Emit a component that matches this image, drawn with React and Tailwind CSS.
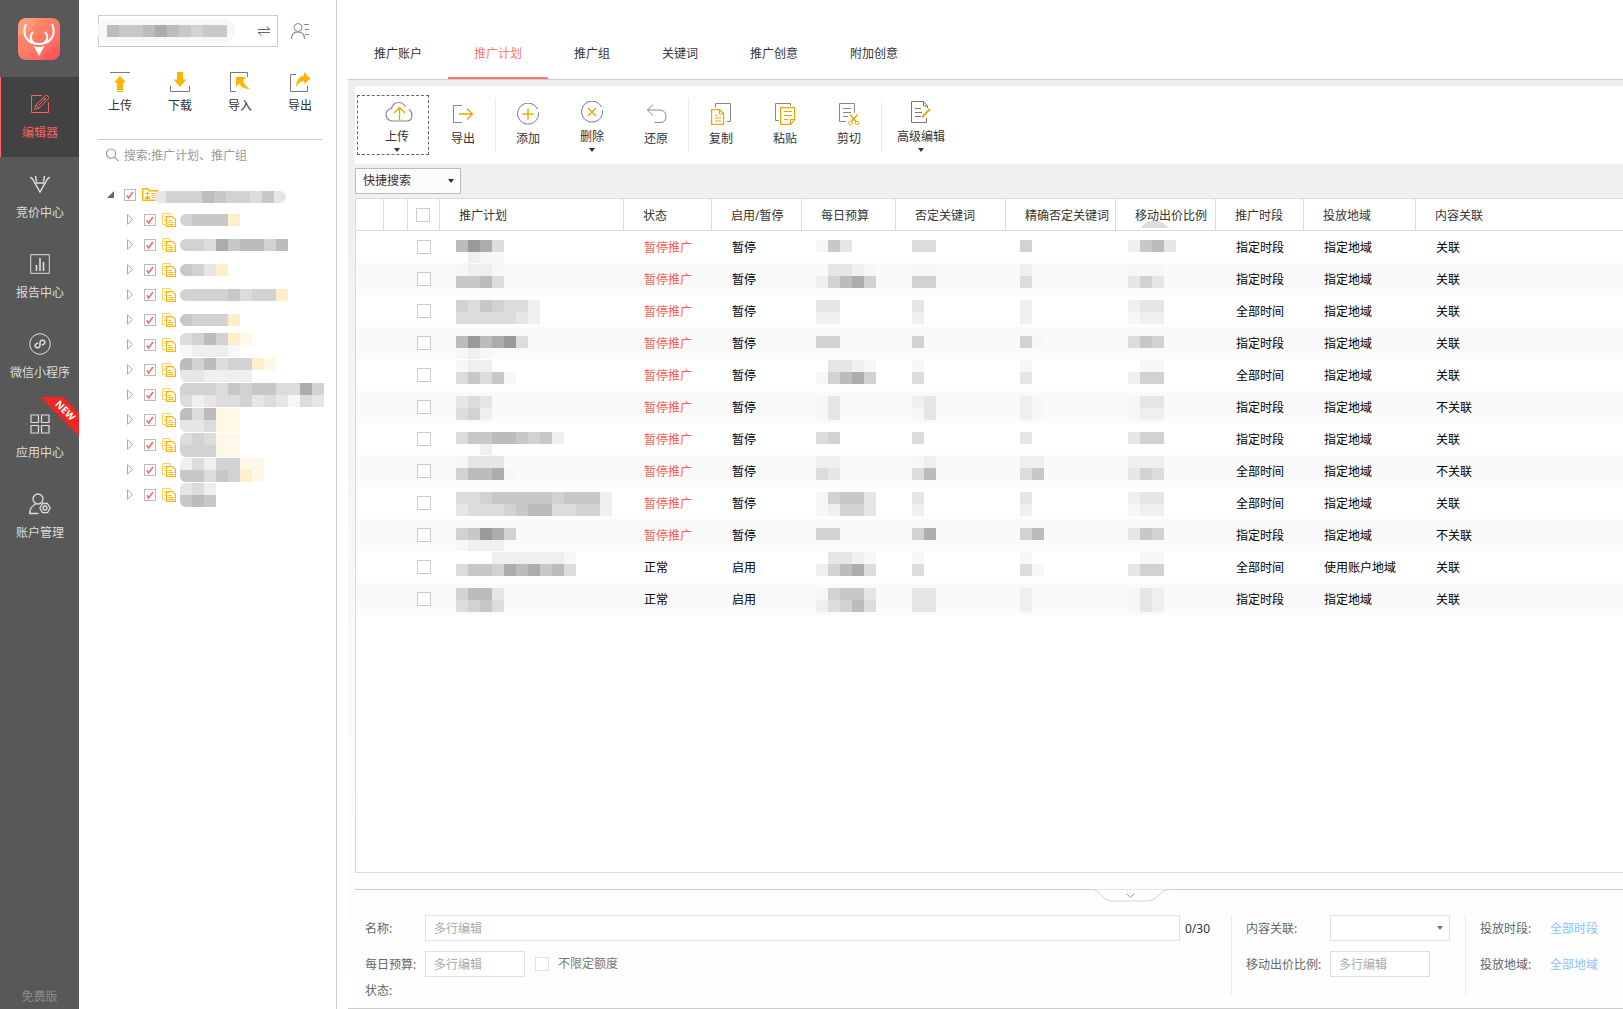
import { useState } from "react";

/* ---------- masked text blocks ---------- */

// one character = one 12px cell, 0 is empty, 1 (light) .. 9 (dark), y / w are yellow
const SHADES = {
  0: "",
  1: "bg-[#f7f7f7]",
  2: "bg-[#efefef]",
  3: "bg-[#e6e6e6]",
  4: "bg-[#dcdcdc]",
  5: "bg-[#d2d2d2]",
  6: "bg-[#c8c8c8]",
  7: "bg-[#bcbcbc]",
  8: "bg-[#acacac]",
  9: "bg-[#999999]",
  y: "bg-[#ffeec9]",
  w: "bg-[#fff8e8]",
};

function Mosaic({ lines, className = "" }) {
  return (
    <span className={`flex flex-col overflow-hidden ${className}`} aria-hidden>
      {lines.map((line, i) => (
        <span key={i} className="flex">
          {line.split("").map((c, j) => (
            <span key={j} className={`size-3 shrink-0 ${SHADES[c]}`} />
          ))}
        </span>
      ))}
    </span>
  );
}

/* ---------- icons ---------- */

function Icon({ size = "size-5", box = 20, className = "", children }) {
  return (
    <svg
      viewBox={`0 0 ${box} ${box}`}
      className={`${size} shrink-0 ${className}`}
      fill="none"
      stroke="currentColor"
      strokeWidth="1"
      aria-hidden
    >
      {children}
    </svg>
  );
}

const Y = "#ffb400";
const O = "#eba600";

function Logo() {
  return (
    <svg viewBox="0 0 42 42" className="size-[42px]" aria-label="logo">
      <defs>
        <linearGradient id="lg" x1="0" y1="0" x2="1" y2="1">
          <stop offset="0" stopColor="#fa9a6c" />
          <stop offset="1" stopColor="#fd5a62" />
        </linearGradient>
        <clipPath id="lc">
          <rect width="42" height="42" rx="8" />
        </clipPath>
      </defs>
      <g clipPath="url(#lc)">
        <rect width="42" height="42" fill="url(#lg)" />
        <path d="M0 18Q14 16 20 0H0z" fill="#fff" opacity=".1" />
        <path d="M22 42q6-12 20-14v14z" fill="#f4484f" opacity=".35" />
      </g>
      <g fill="none" stroke="#fff" strokeWidth="2" strokeLinecap="round">
        <path d="M7.500 7c-2 6-1 12 3 15.500 3 2.500 6.500 3.500 10.500 3.500s7.500-1 10.500-3.500c4-3.500 5-9.500 3-15.500" />
        <path d="M14.500 14.500c-3 3.500-2.500 8 2 11M27.500 14.500c3 3.500 2.500 8-2 11" />
        <path d="M9 20.500q1.500 3 5 4M33 20.500q-1.500 3-5 4" />
      </g>
      <path d="M15.500 28q5.500 2 11 0l-2 3.500L21 38l-3.500-6.500z" fill="#fff" />
    </svg>
  );
}

const EditIcon = () => (
  <Icon>
    <path d="M12 1.500H1.500v17h17V8" />
    <path d="M4.500 15.500l1.500-4.500L15 2q1.500-1.200 3 .2t0 3L9 14.200z M13.500 3.500l3 3M6 11l3 3.200M8.500 11.500l7-7" />
  </Icon>
);

const BidIcon = () => (
  <Icon className="[stroke-width:1.5]">
    <path d="M2 4l8 14 8-14M5 9h10M5.500 2l1 5.500M14.500 2l-1 5.500M0 3l3 2.500M20 3l-3 2.500" />
  </Icon>
);

const ReportIcon = () => (
  <Icon>
    <rect x=".7" y=".7" width="18.600" height="18.600" />
    <path d="M6.500 11v6M10 4v13M13.500 8v9" strokeWidth="1.600" />
  </Icon>
);

const MiniAppIcon = () => (
  <Icon size="size-[22px]" box={22}>
    <circle cx="11" cy="11" r="10.300" />
    <path
      d="M8.500 10.200c-2 .5-3 2-2 3.600 1 1.400 4.300 1.200 4.500-1.300V9.500c.2-2.500 3.500-2.900 4.500-1.300 1 1.500 0 3-2 3.600"
      strokeWidth="1.600"
      strokeLinecap="round"
    />
  </Icon>
);

const AppsIcon = () => (
  <Icon>
    <path d="M1 1h7.500v7.500H1zM11.500 1H19v7.500h-7.500zM1 11.500h7.500V19H1zM11.500 11.500H19V19h-7.500z" strokeWidth="1.200" />
  </Icon>
);

const AccountIcon = () => (
  <Icon size="size-[22px]" box={22} className="[stroke-width:1.300]">
    <circle cx="9" cy="6" r="5" />
    <path d="M9.500 20.500H.7q0-7 6.300-9.500" />
    <path d="M13.500 10.500h5l2.700 4.500-2.700 4.700h-5L10.800 15z" strokeLinejoin="round" />
    <circle cx="16" cy="15" r="2" />
  </Icon>
);

const FolderIcon = () => (
  <Icon size="size-4" box={16}>
    <path d="M.7 13.300V1.700h5l1.500 2h8.100v9.600z" stroke={Y} strokeWidth="1.400" />
    <path d="M5.500 4.500v4M3.500 6.500h4M9.500 6.500H13M9.500 8.500H13M9.500 10.500H13" stroke={Y} />
    <path d="M3 12q0-3 2.500-3T8 12z" fill={Y} stroke="none" />
  </Icon>
);

const PlanIcon = () => (
  <Icon size="size-[14px]" box={14}>
    <path d="M4 11.500H.5V.5H8V3" stroke="#ffcf66" />
    <path d="M2 3.500h4M2 5.500h2M2 7.500h2" stroke="#ffcf66" />
    <path d="M4.600 3.600h6l2.800 2.800v7H4.600z" stroke={Y} strokeWidth="1.200" fill="#fff" />
    <path d="M6.500 7.500h3M6.500 9.500h5M6.500 11.500h5" stroke={Y} />
  </Icon>
);

/* ---------- small controls ---------- */

function Check({ label, size = "size-[14px]", border = "border-[#ccc]", checked = false }) {
  return (
    <span className={`relative block shrink-0 ${size}`}>
      <input
        type="checkbox"
        aria-label={label}
        defaultChecked={checked}
        className={`peer block size-full appearance-none border bg-white ${border}`}
      />
      <svg viewBox="0 0 12 12" className="pointer-events-none absolute inset-0 hidden peer-checked:block" aria-hidden>
        <path d="M2.800 6.200l1.800 2.800L9 3" fill="none" stroke="#fa6e6c" strokeWidth="1.700" />
      </svg>
    </span>
  );
}

const Caret = ({ className = "" }) => (
  <svg viewBox="0 0 6 4" className={`h-1 w-1.5 ${className}`} fill="currentColor" aria-hidden>
    <path d="M0 0h6L3 4z" />
  </svg>
);

/* ---------- data ---------- */

const NAV = [
  { text: "编辑器", icon: EditIcon, active: true },
  { text: "竞价中心", icon: BidIcon },
  { text: "报告中心", icon: ReportIcon },
  { text: "微信小程序", icon: MiniAppIcon },
  { text: "应用中心", icon: AppsIcon, isNew: true },
  { text: "账户管理", icon: AccountIcon },
];

const SIDE_ACTIONS = [
  {
    text: "上传",
    icon: (
      <Icon>
        <path d="M0 .5h20" stroke="#777" />
        <path d="M10 4l6 6.500h-3V18H7v-7.500H4zM7 19h6v1H7z" fill={Y} stroke="none" />
      </Icon>
    ),
  },
  {
    text: "下载",
    icon: (
      <Icon>
        <path d="M.5 14v5.500h19V14" stroke="#777" />
        <path d="M7 0h6v7.500h3.500L10 15 3.500 7.500H7z" fill={Y} stroke="none" />
      </Icon>
    ),
  },
  {
    text: "导入",
    icon: (
      <Icon>
        <path d="M6 19.500H.5V.5h17V5" stroke="#777" />
        <path d="M6 5h10l-3 3.500q1 5 7 8.500-8 0-11-5.500L6 15z" fill={Y} stroke="none" />
      </Icon>
    ),
  },
  {
    text: "导出",
    icon: (
      <Icon>
        <path d="M6 2.500H.5v17h17V14" stroke="#777" />
        <path d="M14 0l6.500 6.500L14 12V9q-5 0-8 6.500Q6 5 14 3.500z" fill={Y} stroke="none" />
      </Icon>
    ),
  },
];

const TREE = [
  ["5666y"],
  ["554867757"],
  ["653y"],
  ["55556455y"],
  ["6555y"],
  ["4575yw", "12221"],
  ["757455yw", "332222"],
  ["555465664485", "423445343143"],
  ["747ww", "334ww"],
  ["454ww", "555ww"],
  ["24255ww", "66465yw"],
  ["342", "676"],
];

const TABS = ["推广账户", "推广计划", "推广组", "关键词", "推广创意", "附加创意"];

const TOOLS = [
  [
    {
      text: "导出",
      icon: (
        <Icon size="size-[22px]" box={22}>
          <path d="M10 2.500H1.500v17H10" stroke="#888" />
          <path d="M7 11h13M15 5.500l5.500 5.500-5.500 5.500" stroke={O} strokeWidth="1.300" />
        </Icon>
      ),
    },
  ],
  [
    {
      text: "添加",
      icon: (
        <Icon size="size-[22px]" box={22}>
          <path d="M20.500 6a10.500 10.500 0 1 0 1 3.500" stroke="#777" />
          <path d="M11 5.500v11M5.500 11h11" stroke={O} strokeWidth="1.400" />
        </Icon>
      ),
    },
    {
      text: "删除",
      menu: true,
      icon: (
        <Icon size="size-[22px]" box={22}>
          <path d="M20.500 6a10.500 10.500 0 1 0 1 3.500" stroke="#777" />
          <path d="M7 7l8 8M15 7l-8 8" stroke={O} strokeWidth="1.400" />
        </Icon>
      ),
    },
    {
      text: "还原",
      icon: (
        <Icon size="size-[22px]" box={22}>
          <path d="M8 1.500L2.500 7 8 12.500M2.500 7H15q6 .5 6 6.500t-6 6H9.500" stroke="#888" />
        </Icon>
      ),
    },
  ],
  [
    {
      text: "复制",
      icon: (
        <Icon size="size-[22px]" box={22}>
          <path d="M5.500 4.500v-4h15v18H17" stroke="#888" />
          <path d="M1.600 6.600h8l4 4v10.800h-12zM9.500 7v4h4" stroke={O} strokeWidth="1.200" />
          <path d="M5 12.500h2M5 15h6M5 18h6" stroke={O} />
        </Icon>
      ),
    },
    {
      text: "粘贴",
      icon: (
        <Icon size="size-[22px]" box={22}>
          <path d="M5 17.500H1.500V.5h15V3" stroke="#888" />
          <path d="M6.600 4.600h14v12l-4 4.800h-10zM20.500 16.500h-4v4.500" stroke={O} strokeWidth="1.200" />
          <path d="M10 8.500h8M10 12.500h8M10 16.500h4" stroke={O} />
        </Icon>
      ),
    },
    {
      text: "剪切",
      icon: (
        <Icon size="size-[22px]" box={22}>
          <path d="M8 18.500H1.500V.5h15V10M5 5.500h8M5 9.500h8M5 13.500h5" stroke="#888" />
          <path d="M12 11.500l6 7M19.500 11.500l-6 7" stroke={O} strokeWidth="1.500" />
          <circle cx="12.500" cy="20" r="1.800" stroke={O} />
          <circle cx="19" cy="20" r="1.800" stroke={O} />
        </Icon>
      ),
    },
  ],
];

// mask = name / daily budget / negative words / exact negative words / mobile bid
const ROWS = [
  [true, "指定时段", "指定地域", "关联", [["7984", "0211"], ["163"], ["44"], ["5"], ["2673"]]],
  [true, "指定时段", "指定地域", "关联", [["1221", "6674"], ["03321", "25785"], ["11", "55"], ["2", "4"], ["111", "353"]]],
  [true, "全部时间", "指定地域", "关联", [["5465442", "4444432"], ["33", "22"], ["3", "2"], ["2", "2"], ["233", "122"]]],
  [true, "指定时段", "指定地域", "关联", [["797894", "1210"], ["55"], ["5"], ["51"], ["465"]]],
  [true, "全部时间", "指定地域", "关联", [["122", "46461"], ["03321", "15785"], ["1", "4"], ["1", "3"], ["011", "255"]]],
  [true, "指定时段", "指定地域", "不关联", [["343", "452"], ["13", "13"], ["23", "13"], ["21", "21"], ["133", "122"]]],
  [true, "指定时段", "指定地域", "关联", [["466776562", "0020"], ["45"], ["4"], ["3"], ["355"]]],
  [true, "全部时间", "指定地域", "不关联", [["1333", "57781"], ["22", "43"], ["12", "47"], ["22", "46"], ["222", "354"]]],
  [true, "全部时间", "指定地域", "关联", [["4456666656662", "3444567744552"], ["15663", "12553"], ["3", "2"], ["3", "2"], ["233", "122"]]],
  [true, "指定时段", "指定地域", "不关联", [["56985", "1222"], ["55"], ["58"], ["57"], ["365"]]],
  [false, "全部时间", "使用账户地域", "关联", [["0002222221", "4665878674"], ["03321", "25784"], ["1", "4"], ["1", "41"], ["011", "355"]]],
  [false, "指定时段", "指定地域", "关联", [["5773", "4564"], ["15663", "24574"], ["33", "33"], ["2", "2"], ["132", "132"]]],
];

const COLS = [
  "w-7",
  "w-6",
  "w-8",
  "w-[184px]",
  "w-[88px]",
  "w-[90px]",
  "w-[94px]",
  "w-[110px]",
  "w-[110px]",
  "w-[100px]",
  "w-[88px]",
  "w-[112px]",
  "",
];

const HEADS = [
  "推广计划",
  "状态",
  "启用/暂停",
  "每日预算",
  "否定关键词",
  "精确否定关键词",
  "移动出价比例",
  "推广时段",
  "投放地域",
  "内容关联",
];

// the mask grid is 12px, rows are 32px, so it repeats every three rows
const MASK_TOP = ["pt-[9px]", "pt-px", "pt-[5px]"];
// left padding of the five masked columns
const MASK_LEFT = ["pl-4", "pl-3.5", "pl-4", "pl-3.5", "pl-3"];

/* ---------- layout parts ---------- */

function NavBar() {
  return (
    <nav className="flex w-[79px] shrink-0 flex-col bg-[#585858] text-[#ddd]">
      <div className="flex h-[77px] shrink-0 items-center justify-center pr-px">
        <Logo />
      </div>
      {NAV.map(({ text, icon: Glyph, active, isNew }) => (
        <a
          key={text}
          href="#"
          className={`relative flex h-20 flex-col items-center border-l pt-4 ${
            active ? "border-[#ff6b68] bg-[#424242] text-[#f9605d]" : "border-transparent"
          }`}
        >
          <span className="flex h-[22px] items-center">
            <Glyph />
          </span>
          <span className="mt-2.5 leading-4">{text}</span>
          {isNew && (
            <svg viewBox="0 0 39 39" className="absolute top-0 right-0 size-[39px] overflow-visible">
              <path d="M0 0h23l16 16v23z" fill="#f32424" />
              <text
                x="25"
                y="17"
                transform="rotate(45 25 14)"
                textAnchor="middle"
                fill="#fff"
                className="font-['Open_Sans',sans-serif] text-[10px] font-bold"
              >
                NEW
              </text>
            </svg>
          )}
        </a>
      ))}
      <div className="mt-auto pb-1 text-center leading-4 text-[#8c8c8c]">免费版</div>
    </nav>
  );
}

function SidePanel() {
  return (
    <aside className="flex w-[258px] shrink-0 flex-col border-r border-[#c9c9ce] bg-white">
      <div className="ml-[19px] flex items-center pt-[15px]">
        <button
          type="button"
          aria-label="切换账户"
          className="flex h-8 w-[180px] items-center justify-between border border-[#ccc] pr-[7px]"
        >
          <span className="-ml-0.5 flex h-6 items-center rounded-full bg-[#f7f7f7] pr-2 pl-2.5">
            <Mosaic lines={["7667876566"]} />
          </span>
          <svg viewBox="0 0 12 10" className="h-2.5 w-3" fill="none" stroke="#666" aria-hidden>
            <path d="M0 3.500h12L8.500.5M12 6.500H0l3.500 3" />
          </svg>
        </button>
        <button type="button" aria-label="账户列表" className="ml-[13px] text-[#888]">
          <svg viewBox="0 0 18 16" className="h-4 w-[18px]" fill="none" stroke="currentColor" aria-hidden>
            <circle cx="7" cy="4.500" r="4" />
            <path d="M.5 16q0-7 6.500-7t6.500 7M13 1.500h5M14 6.500h4M14 11.500h4" strokeWidth="1.200" />
          </svg>
        </button>
      </div>

      <div className="mr-[6px] ml-[11px] flex justify-between pt-[25px]">
        {SIDE_ACTIONS.map((a) => (
          <button key={a.text} type="button" className="flex w-[60px] flex-col items-center text-[#333]">
            {a.icon}
            <span className="mt-1.5 leading-4">{a.text}</span>
          </button>
        ))}
      </div>

      <div className="mt-[25px] mr-3.5 ml-[19px] border-t border-[#ccc]">
        <label className="flex h-[30px] items-center gap-[5px] pl-2 text-[#999]">
          <svg viewBox="0 0 14 14" className="size-3.5" fill="none" stroke="currentColor" strokeWidth="1.200" aria-hidden>
            <circle cx="5.500" cy="5.500" r="5" />
            <path d="M9.200 9.200l4.500 4.500" />
          </svg>
          <input
            type="text"
            aria-label="搜索"
            placeholder="搜索:推广计划、推广组"
            className="w-full pt-0.5 outline-none placeholder:text-[#999]"
          />
        </label>
      </div>

      <ul className="mt-3">
        <li className="flex h-[25px] items-center pl-7">
          <svg viewBox="0 0 7 7" className="mr-2.5 size-[7px]" aria-hidden>
            <path d="M7 0v7H0z" fill="#666" />
          </svg>
          <Check label="账户" size="size-3" border="border-[#bbb]" checked />
          <span className="ml-1.5">
            <FolderIcon />
          </span>
          <span className="-ml-1 pt-1">
            <Mosaic className="rounded-full" lines={["35557655463"]} />
          </span>
        </li>
        {TREE.map((lines, i) => (
          <li key={i} className="flex h-[25px] items-center pl-12">
            <svg viewBox="0 0 7 11" className="mr-2.5 h-[11px] w-[7px]" fill="none" stroke="#aaa" aria-hidden>
              <path d="M.5.8v9.400l5-4.700z" />
            </svg>
            <Check label={`计划${i + 1}`} size="size-3" border="border-[#bbb]" checked />
            <span className="mr-1 ml-1.5">
              <PlanIcon />
            </span>
            <Mosaic className="rounded-l-md" lines={lines} />
          </li>
        ))}
      </ul>
    </aside>
  );
}

function ToolButton({ tool, wide }) {
  return (
    <button
      type="button"
      className={`flex h-[60px] flex-col items-center ${wide ? "w-[78px]" : "w-16"} ${
        tool.menu ? "pt-1.5" : "pt-2"
      }`}
    >
      {tool.icon}
      <span className="mt-1.5 leading-4">{tool.text}</span>
      {tool.menu && <Caret className="mt-[3px]" />}
    </button>
  );
}

const ToolDivider = () => <span className="h-[54px] w-px bg-[#ececec]" />;

function Toolbar() {
  return (
    <div className="flex h-[78px] shrink-0 items-center bg-white pl-0.5 text-[#333]">
      <button
        type="button"
        className="mr-0.5 flex h-[60px] w-[72px] flex-col items-center border border-dashed border-[#666] pt-[5px] pl-2"
      >
        <svg viewBox="0 0 28 22" className="ml-1 h-[22px] w-7" fill="none" aria-hidden>
          <path
            d="M20.500 6Q18 1.500 14 1.500q-6 0-7.500 6Q1 8.500 1 13.500T6.500 20h15q5.500 0 5.500-5.500 0-4-3-6"
            stroke="#888"
            strokeWidth="1.200"
          />
          <path d="M14.500 19V7M9 12l5.500-5.500L20 12" stroke={O} strokeWidth="1.400" />
        </svg>
        <span className="mt-1.5 leading-4">上传</span>
        <Caret className="mt-[3px]" />
      </button>
      {TOOLS.map((group, i) => (
        <div key={i} className="flex items-center">
          {group.map((tool) => (
            <ToolButton key={tool.text} tool={tool} />
          ))}
          <ToolDivider />
        </div>
      ))}
      <ToolButton
        wide
        tool={{
          text: "高级编辑",
          menu: true,
          icon: (
            <Icon size="size-[22px]" box={22}>
              <path d="M17.500 7V5l-4-4.500h-12v21h15V17M13.500 1v4h4M5 7.500h6M5 11.500h7M5 15.500h6" stroke="#777" />
              <path d="M12.500 16.500l1.500-2.500 6-6" stroke={O} strokeWidth="2" />
            </Icon>
          ),
        }}
      />
    </div>
  );
}

function MaskCell({ lines, row, col }) {
  return (
    <td>
      <div className={`flex h-8 items-start overflow-hidden ${MASK_LEFT[col]} ${MASK_TOP[row % 3]}`}>
        <Mosaic lines={lines} />
      </div>
    </td>
  );
}

function TextCell({ children, className = "" }) {
  return (
    <td className={className}>
      <span className="block pt-0.5 pl-5">{children}</span>
    </td>
  );
}

function PlanTable() {
  return (
    <div className="min-h-0 flex-1 overflow-hidden border-y border-l border-[#dcdcdc] bg-white">
      <table className="w-full table-fixed border-separate border-spacing-0">
        <colgroup>
          {COLS.map((w, i) => (
            <col key={i} className={w} />
          ))}
        </colgroup>
        <thead>
          <tr className="h-8 text-left text-[#333] [&>th]:border-b [&>th]:border-[#dcdcdc] [&>th]:p-0 [&>th]:font-normal">
            <th className="border-r" />
            <th className="border-r" />
            <th className="border-r">
              <span className="flex justify-center pr-px">
                <Check label="全选" />
              </span>
            </th>
            {HEADS.map((h, i) => (
              <th key={h} className={`relative whitespace-nowrap ${i < 9 ? "border-r" : ""}`}>
                <span className="block pt-0.5 pl-[19px]">{h}</span>
                {h === "移动出价比例" && (
                  <svg viewBox="0 0 28 7" className="absolute bottom-0.5 left-[25px] h-[7px] w-7" aria-hidden>
                    <path d="M0 7Q3 1 10 0h7q6 1 11 7z" fill="#dedede" />
                  </svg>
                )}
              </th>
            ))}
          </tr>
        </thead>
        <tbody>
          {ROWS.map(([paused, time, area, link, mask], i) => (
            <tr key={i} className="h-8 text-black even:bg-[#fafafa] [&>td]:p-0">
              <td />
              <td />
              <td>
                <span className="flex justify-center">
                  <Check label={`选择第${i + 1}行`} />
                </span>
              </td>
              <MaskCell lines={mask[0]} row={i} col={0} />
              <TextCell className={paused ? "text-[#f9604f]" : ""}>{paused ? "暂停推广" : "正常"}</TextCell>
              <TextCell>{paused ? "暂停" : "启用"}</TextCell>
              {mask.slice(1).map((lines, j) => (
                <MaskCell key={j} lines={lines} row={i} col={j + 1} />
              ))}
              <TextCell>{time}</TextCell>
              <TextCell>{area}</TextCell>
              <TextCell>{link}</TextCell>
            </tr>
          ))}
        </tbody>
      </table>
    </div>
  );
}

const field = "h-[26px] border border-[#e0e0e0] bg-white px-2 outline-none placeholder:text-[#aaa]";

function EditPanel() {
  return (
    <section className="relative mt-4 flex shrink-0 border-t border-[#ccc] bg-[#fefefe] pt-[25px] pb-[7px] text-[#666]">
      <button type="button" aria-label="收起" className="absolute -top-px left-[775px] -translate-x-1/2">
        <svg viewBox="0 0 80 13" className="h-[13px] w-20" fill="none" aria-hidden>
          <path d="M0 .5h2q4 0 8 4.500 6 7 12 7h36q6 0 12-7 4-4.500 8-4.500h2" stroke="#d4d4d4" fill="#fff" />
          <path d="M36.500 4.500l4 4 4-4" stroke="#999" />
        </svg>
      </button>

      <div className="min-w-0 flex-1 pr-5 pl-2.5">
        <div className="flex items-center">
          <label htmlFor="name" className="w-[60px] shrink-0 pt-0.5">
            名称:
          </label>
          <input id="name" placeholder="多行编辑" className={`${field} min-w-0 flex-1`} />
          <span className="w-[31px] shrink-0 pt-0.5 pl-[5px] text-[#333]">0/30</span>
        </div>
        <div className="mt-2.5 flex items-center">
          <label htmlFor="budget" className="w-[60px] shrink-0 pt-0.5">
            每日预算:
          </label>
          <input id="budget" placeholder="多行编辑" className={`${field} w-[100px]`} />
          <label className="ml-2.5 flex items-center gap-[9px] text-[#777]">
            <Check label="不限定额度" border="border-[#e0e0e0]" />
            不限定额度
          </label>
        </div>
        <div className="mt-1 leading-5">状态:</div>
      </div>

      <div className="h-20 w-[234px] shrink-0 border-l border-[#ececec] pl-3.5">
        <div className="flex items-center">
          <label htmlFor="link" className="w-[84px] shrink-0 pt-0.5">
            内容关联:
          </label>
          <span className="relative">
            <select id="link" defaultValue="" className={`${field} block w-[120px] appearance-none`}>
              <option value="" />
              <option>关联</option>
              <option>不关联</option>
            </select>
            <Caret className="pointer-events-none absolute top-[11px] right-[7px] text-[#777]" />
          </span>
        </div>
        <div className="mt-2.5 flex items-center">
          <label htmlFor="ratio" className="w-[84px] shrink-0 pt-0.5">
            移动出价比例:
          </label>
          <input id="ratio" placeholder="多行编辑" className={`${field} w-[100px]`} />
        </div>
      </div>

      <div className="h-20 w-[158px] shrink-0 border-l border-[#ececec] pl-3.5">
        <div className="flex h-[26px] items-center pt-0.5">
          <span className="w-[70px]">投放时段:</span>
          <a href="#" className="text-[#8fc1ff]">
            全部时段
          </a>
        </div>
        <div className="mt-2.5 flex h-[26px] items-center pt-0.5">
          <span className="w-[70px]">投放地域:</span>
          <a href="#" className="text-[#8fc1ff]">
            全部地域
          </a>
        </div>
      </div>
    </section>
  );
}

export default function App() {
  const [tab, setTab] = useState("推广计划");

  return (
    <div className="flex h-screen overflow-hidden bg-white font-['Noto_Sans','Noto_Sans_CJK_SC',sans-serif] text-[12px] leading-4">
      <NavBar />
      <SidePanel />
      <main className="ml-[11px] flex min-w-0 flex-1 flex-col">
        <div className="flex h-20 shrink-0 items-end border-b border-[#ccc]">
          {TABS.map((t) => (
            <button
              key={t}
              type="button"
              onClick={() => setTab(t)}
              className={`h-[52px] border-b-2 px-[26px] pt-1 ${
                t === tab ? "border-[#fb7873] text-[#fb7873]" : "border-transparent text-[#333]"
              }`}
            >
              {t}
            </button>
          ))}
        </div>
        <div className="flex min-h-0 flex-1 flex-col border-b border-[#ccc] bg-linear-to-b from-[#eee] to-white pt-1.5 pl-[7px]">
          <Toolbar />
          <div className="shrink-0 py-1">
            <span className="relative block w-[106px]">
              <select
                aria-label="快捷搜索"
                className="block h-[26px] w-full appearance-none border border-[#bbb] bg-[#fcfcfc] px-[7px] text-[#333] outline-none"
              >
                <option>快捷搜索</option>
              </select>
              <Caret className="pointer-events-none absolute top-[11px] right-[7px] text-[#333]" />
            </span>
          </div>
          <PlanTable />
          <EditPanel />
        </div>
      </main>
    </div>
  );
}
